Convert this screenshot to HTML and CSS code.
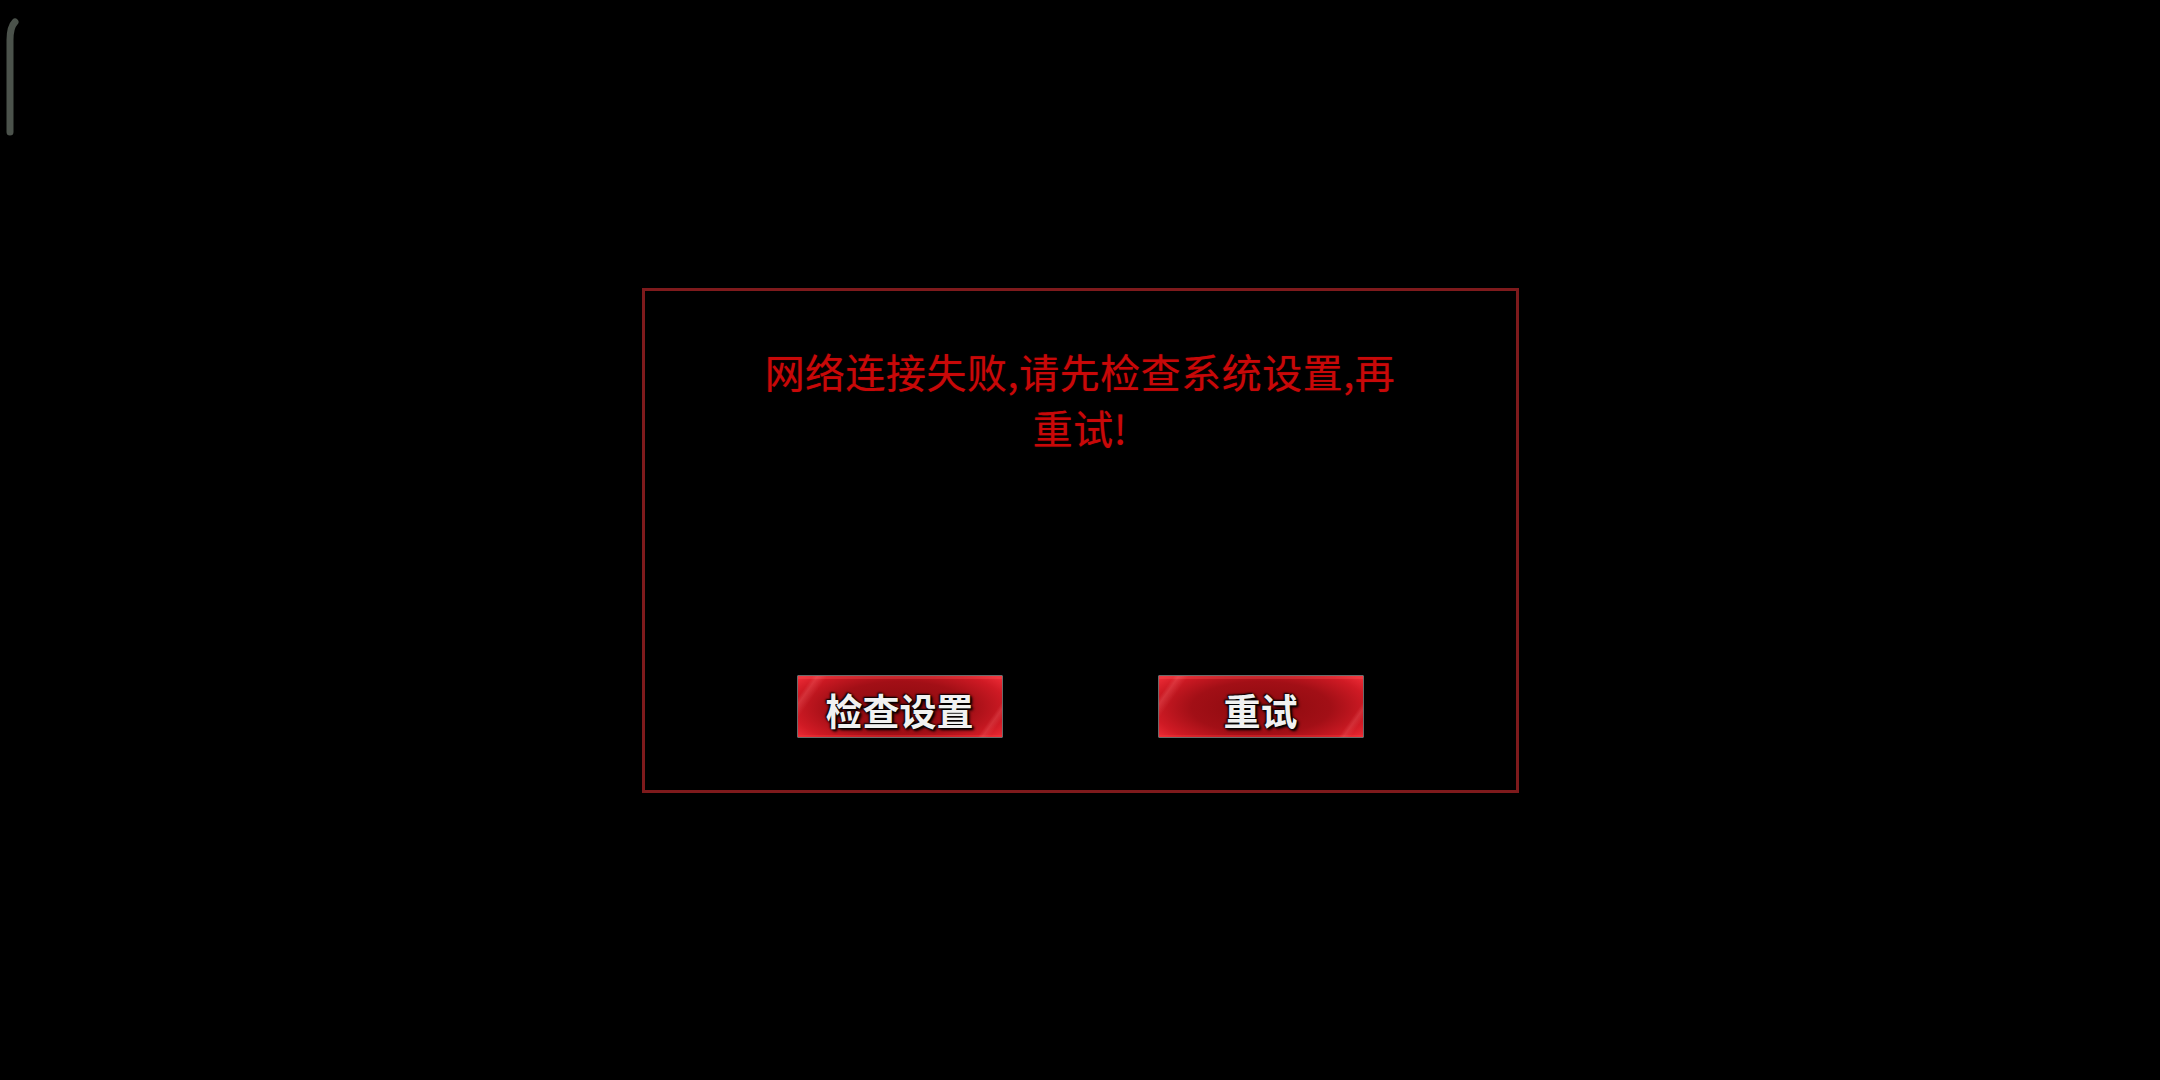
FILE: index.html
```html
<!DOCTYPE html>
<html lang="zh-CN">
<head>
<meta charset="utf-8">
<title>网络连接失败</title>
<link rel="stylesheet" href="styles.css">
</head>
<body>
<div class="edge-handle">
  <svg width="24" height="140" viewBox="0 0 24 140"><path d="M15 22 C11 26 10 32 10 40 L10 132" fill="none" stroke="#4b524b" stroke-width="7" stroke-linecap="round"/></svg>
</div>
<main class="stage">
  <section class="dialog">
    <p class="message">网络连接失败,请先检查系统设置,再<br>重试!</p>
    <div class="actions">
      <button class="btn">检查设置</button>
      <button class="btn">重试</button>
    </div>
  </section>
</main>
</body>
</html>
```
FILE: styles.css
```css
html, body {
  margin: 0;
  padding: 0;
  background: #000;
  height: 100%;
}
body {
  font-family: "Noto Sans CJK SC", "Noto Sans", sans-serif;
  overflow: hidden;
}
.edge-handle {
  position: absolute;
  left: 0;
  top: 0;
}
.stage {
  height: 100vh;
  display: flex;
  align-items: center;
  justify-content: center;
}
.dialog {
  box-sizing: border-box;
  width: 877px;
  height: 505px;
  border: 3px solid #7e1a1c;
  display: flex;
  flex-direction: column;
  justify-content: space-between;
  align-items: center;
  padding: 52px 0 52px;
}
.message {
  margin: 0;
  color: #c80808;
  font-size: 40px;
  font-weight: 400;
  line-height: 56px;
  text-align: center;
  letter-spacing: 0.5px;
  text-shadow: 0 0 1px rgba(200, 8, 8, 0.6);
}
.actions {
  display: flex;
  gap: 155px;
}
.btn {
  position: relative;
  box-sizing: border-box;
  width: 206px;
  height: 63px;
  border: 1px solid #6a6a6a;
  border-radius: 1px;
  padding: 7px 0 0;
  font-family: "Noto Sans CJK SC", sans-serif;
  font-size: 37px;
  font-weight: 700;
  color: #f1f1f1;
  text-shadow: 0 0 2px #000, 1px 1px 2px #000, -1px -1px 2px #000, 2px 2px 3px #000;
  background: radial-gradient(ellipse 62% 78% at 50% 52%, #8a0a0e 0%, #a20f16 55%, #cf1a24 85%, #ea2a34 100%);
  box-shadow: inset 0 3px 0 rgba(255,90,90,0.3), inset 0 -2px 0 rgba(255,60,60,0.3);
  overflow: hidden;
}
.btn::before {
  content: "";
  position: absolute;
  left: 0;
  top: 0;
  width: 100%;
  height: 100%;
  background:
    linear-gradient(125deg, transparent 0 6%, rgba(255,140,140,0.22) 8%, transparent 12%),
    linear-gradient(125deg, transparent 0 90%, rgba(255,140,140,0.2) 92%, transparent 95%);
  pointer-events: none;
}
```
